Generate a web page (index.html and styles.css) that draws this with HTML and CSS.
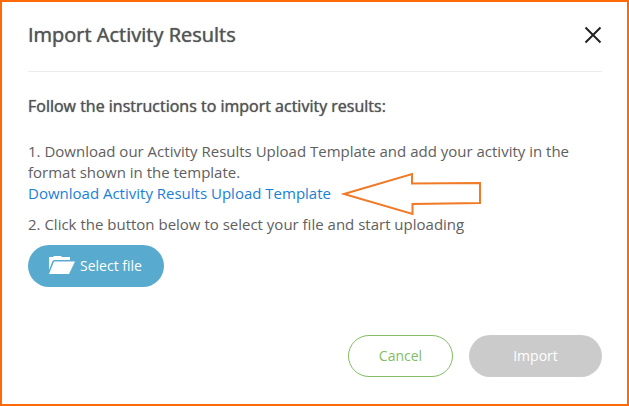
FILE: index.html
```html
<!DOCTYPE html>
<html lang="en">
<head>
<meta charset="utf-8">
<meta name="viewport" content="width=device-width, initial-scale=1">
<title>Import Activity Results</title>
<link rel="stylesheet" href="styles.css">
</head>
<body>
<main class="dialog" role="dialog" aria-labelledby="dialog-title">
  <header class="dialog-header">
    <h1 class="dialog-title" id="dialog-title">Import Activity Results</h1>
    <button class="close" type="button" aria-label="Close">
      <svg width="18" height="18" viewBox="0 0 18 18" fill="none" stroke="#222226" stroke-width="2" aria-hidden="true"><path d="M1.500 1.500L16.500 16.500M16.500 1.500L1.500 16.500"/></svg>
    </button>
  </header>
  <section class="dialog-body">
    <h2 class="lead">Follow the instructions to import activity results:</h2>
    <p class="step">1. Download our Activity Results Upload Template and add your activity in the format shown in the template.<br>
      <span class="link-line"><a class="link" href="#template">Download Activity Results Upload Template</a><svg class="pointer" width="142" height="46" viewBox="0 0 142 46" fill="none" stroke="#f07a28" stroke-width="2" aria-hidden="true"><path d="M4 23L72 3V12.500L140 12V32L72.500 33V43Z"/></svg></span>
    </p>
    <p class="step">2. Click the button below to select your file and start uploading</p>
    <button class="btn btn-select" type="button">
      <svg width="27" height="20" viewBox="0 0 27 20" fill="#fff" aria-hidden="true"><path d="M0 15V2H4L5 1H12L13 2H21V5H5L3.500 6Z"/><path d="M5 6.500H26L20 19H0Z"/></svg>
      Select file
    </button>
  </section>
  <footer class="dialog-footer">
    <button class="btn btn-cancel" type="button">Cancel</button>
    <button class="btn btn-import" type="button" disabled>Import</button>
  </footer>
</main>
</body>
</html>
```
FILE: styles.css
```css
* {
  box-sizing: border-box;
}

body {
  margin: 0;
  background: #fff;
  color: #606060;
  font: 15px/21px "Open Sans", "Noto Sans", sans-serif;
}

.dialog {
  display: flex;
  flex-direction: column;
  min-height: 100vh;
  padding: 18px 25px 27px 26px;
  border: 2px solid #ff6a08;
}

.dialog-header {
  display: flex;
  align-items: center;
  justify-content: space-between;
  padding-bottom: 21px;
  border-bottom: 1px solid #ededed;
}

.dialog-title,
.lead {
  margin: 0;
  color: #555;
  font-weight: 400;
  text-shadow: 0 0 1px #555;
}

.dialog-title {
  font-size: 20px;
  line-height: 30px;
}

.close {
  display: flex;
  padding: 0;
  border: 0;
  background: none;
}

.dialog-body {
  padding-top: 24px;
}

.lead {
  margin-bottom: 24px;
  font-size: 16px;
}

.step {
  margin: 0 0 10px;
}

.link-line {
  position: relative;
}

.link {
  color: #1a7fd8;
  text-decoration: none;
}

.pointer {
  position: absolute;
  top: -12px;
  left: 100%;
  margin-left: 9px;
}

.btn {
  display: inline-flex;
  align-items: center;
  justify-content: center;
  height: 42px;
  padding: 0 0 2px;
  border: 0;
  border-radius: 21px;
  color: #fff;
  font: inherit;
  font-size: 14px;
}

.btn-select {
  gap: 4px;
  padding: 0 22px 2px 21px;
  background: #58aace;
}

.dialog-footer {
  display: flex;
  justify-content: flex-end;
  gap: 16px;
  margin-top: auto;
}

.btn-cancel {
  width: 105px;
  border: 1px solid #82bd64;
  background: #fff;
  color: #82bd64;
}

.btn-import {
  width: 133px;
  background: #cbcbcb;
}
```
